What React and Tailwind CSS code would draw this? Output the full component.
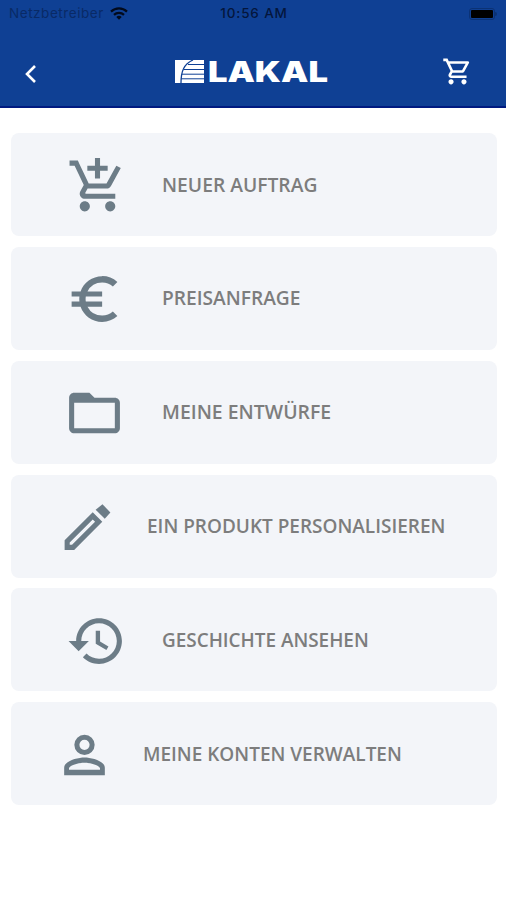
import { MdAddShoppingCart, MdEuroSymbol, MdFolderOpen, MdOutlineShoppingCart } from 'react-icons/md';

const EditIcon = ({ className }) => (
    <svg viewBox="0 0 24 24" fill="currentColor" className={className}>
        <path fillRule="evenodd" d="M14.06 6.19L3 17.25V21h3.75L17.81 9.94l-3.75-3.75zM14.06 9.02l.92.92L5.92 19H5v-.92z" />
        <path d="M17.9 3L21 6.3 18.8 8.8 15.2 5.2z" />
    </svg>
);

const HistoryIcon = ({ className }) => (
    <svg viewBox="0 0 24 24" fill="currentColor" className={className}>
        <path d="M13 3c-4.97 0-9 4.03-9 9H1l3.89 3.89.07.14L9 12H6c0-3.87 3.13-7 7-7s7 3.13 7 7-3.13 7-7 7c-1.93 0-3.68-.79-4.94-2.06l-1.42 1.42C8.27 19.99 10.51 21 13 21c4.97 0 9-4.03 9-9s-4.03-9-9-9z" />
        <path d="M11.7 8v5.1l4.2 2.4.8-1.3-3.3-2V8z" />
    </svg>
);

const PersonIcon = ({ className }) => (
    <svg viewBox="0 0 24 24" fill="currentColor" fillRule="evenodd" className={className}>
        <path d="M12 4a4 4 0 1 0 0 8 4 4 0 0 0 0-8zm0 2a2 2 0 1 1 0 4 2 2 0 0 1 0-4z" />
        <path d="M12 13c-2.67 0-8 1.34-8 4v3h16v-3c0-2.66-5.33-4-8-4zm-6.1 4.8v-.6c0-.9 3.1-2.2 6.1-2.2s6.1 1.3 6.1 2.2v.6z" />
    </svg>
);

const WifiIcon = () => (
    <svg viewBox="0 0 18 13" className="h-[13px] w-[18px]" fill="none" stroke="#020a1c" strokeWidth="2.2">
        <path d="M1 4.6a11.6 11.6 0 0 1 16 0" />
        <path d="M4 7.9a7.3 7.3 0 0 1 10 0" />
        <path d="M9 12.8L6.3 10.1a3.8 3.8 0 0 1 5.4 0z" fill="#020a1c" stroke="none" />
    </svg>
);

const LogoMark = () => (
    <svg viewBox="0 0 29 23" className="h-[23px] w-[29px]">
        <path d="M0 0h29v23H0z" fill="#fff" />
        <path d="M6 23C6 11 9 4 18 0" fill="none" stroke="#0f4094" strokeWidth="1.3" />
        <path d="M13 4.5h16M9 9.5h20M7 14.2h22M6 18.8h23" stroke="#0f4094" strokeWidth="1" />
    </svg>
);

const items = [
    { label: 'NEUER AUFTRAG', icon: MdAddShoppingCart, row: 'pl-[55.5px] gap-[34.5px]', text: 'scale-x-[0.963]' },
    { label: 'PREISANFRAGE', icon: MdEuroSymbol, row: 'pl-[53px] gap-[37px]', text: 'scale-x-[0.958]' },
    { label: 'MEINE ENTWÜRFE', icon: MdFolderOpen, row: 'pl-[53px] gap-[37px]', text: 'scale-x-[0.971]' },
    { label: 'EIN PRODUKT PERSONALISIEREN', icon: EditIcon, row: 'pl-[45.5px] gap-[29.5px]', text: 'scale-x-[0.949]' },
    { label: 'GESCHICHTE ANSEHEN', icon: HistoryIcon, row: 'pl-[55px] gap-[35px]', text: 'scale-x-[0.945]' },
    { label: 'MEINE KONTEN VERWALTEN', icon: PersonIcon, row: 'pl-[43px] gap-[28px]', text: 'scale-x-[0.949]' },
];

const App = () => (
    <div className="flex h-[900px] w-[506px] flex-col bg-white">
        <header className="flex h-[108px] flex-col border-b-2 border-[#001a80] bg-[#0f4094]">
            <div className="grid h-[27px] grid-cols-3 items-center px-[9px] font-['Inter'] text-[13.5px] text-[#04163c]">
                <div className="flex items-center gap-[6px]">
                    <span className="tracking-[0.55px] text-[#092a66]">Netzbetreiber</span>
                    <WifiIcon />
                </div>
                <span className="pl-[2px] text-center font-medium tracking-[0.85px]">10:56 AM</span>
                <div className="flex items-center justify-end">
                    <span className="h-[12px] w-[26px] rounded-[3px] border border-[#0b3275] p-[1px]">
                        <span className="block h-full w-full rounded-[1px] bg-black" />
                    </span>
                    <span className="h-1 w-[2px] rounded-r bg-[#0b3275]" />
                </div>
            </div>
            <div className="flex flex-1 items-center pt-[9px] pr-[33px] pl-[24px] text-white">
                <button type="button" aria-label="Zurück" className="pt-[5px]">
                    <svg viewBox="0 0 14 20" className="h-5 w-[14px]" fill="none" stroke="currentColor" strokeWidth="2.6">
                        <path d="M11 2L3 10l8 8" />
                    </svg>
                </button>
                <div className="ml-[137px] flex items-center gap-1">
                    <LogoMark />
                    <span className="origin-left scale-x-[1.23] pt-[2px] font-['Inter'] text-[28px] leading-none font-black">LAKAL</span>
                </div>
                <button type="button" aria-label="Warenkorb" className="ml-auto">
                    <MdOutlineShoppingCart className="h-[31px] w-[31px]" />
                </button>
            </div>
        </header>

        <main className="flex flex-col gap-[10.8px] pt-[25.2px] pr-[9px] pl-[11px]">
            {items.map(({ label, icon: Icon, row, text }) => (
                <button key={label} type="button" className={`flex h-[103px] items-center rounded-lg bg-[#f3f5f9] ${row}`}>
                    <Icon className="mt-[2px] h-[62px] w-[61px] shrink-0 text-[#6c7c87]" />
                    <span className={`origin-left font-['Open_Sans'] text-[20px] font-semibold whitespace-nowrap text-[#7d7d7d] ${text}`}>
                        {label}
                    </span>
                </button>
            ))}
        </main>
    </div>
);

export default App;
